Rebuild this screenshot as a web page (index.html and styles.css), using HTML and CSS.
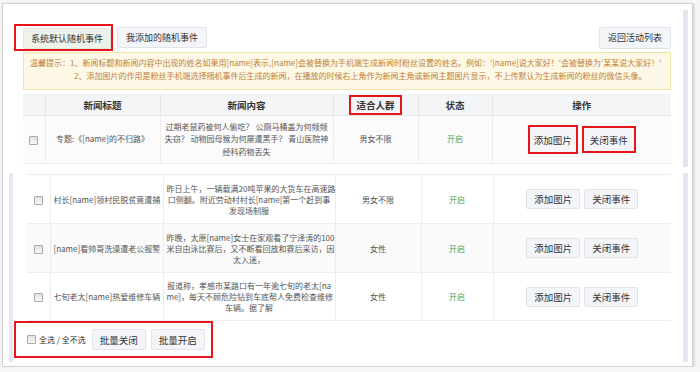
FILE: index.html
```html
<!DOCTYPE html>
<html>
<head>
    <title>随机事件管理</title>
    <meta charset="utf-8">
    <link rel="stylesheet" href="styles.css">
</head>
<body>
<div class="frame">
    <div class="shot shot-top">
        <div class="shot-body">
            <div class="toolbar">
                <div class="tab-mark">
                    <button type="button" class="btn btn-tab btn-active">系统默认随机事件</button>
                </div>
                <button type="button" class="btn btn-tab btn-second">我添加的随机事件</button>
                <button type="button" class="btn btn-back">返回活动列表</button>
            </div>
            <div class="notice">
                <div>温馨提示：1、新闻标题和新闻内容中出现的姓名如果用[name]表示,[name]会被替换为手机端生成新闻时粉丝设置的姓名。例如：'[name]说大家好！'会被替换为'某某说大家好！'</div>
                <div class="notice-second">2、添加图片的作用是粉丝手机端选择随机事件后生成的新闻，在播放的时候右上角作为新闻主角或新闻主题图片显示，不上传默认为生成新闻的粉丝的微信头像。</div>
            </div>
            <table class="events events-top">
                <colgroup>
                    <col style="width:22px"><col style="width:115px"><col style="width:173px">
                    <col style="width:85px"><col style="width:74px"><col>
                </colgroup>
                <tr>
                    <th></th>
                    <th>新闻标题</th>
                    <th>新闻内容</th>
                    <th><span class="th-mark">适合人群</span></th>
                    <th>状态</th>
                    <th>操作</th>
                </tr>
                <tr class="row-grey">
                    <td><span class="check"></span></td>
                    <td>专题:《[name]的不归路》</td>
                    <td class="content">过期老鼠药被何人偷吃？ 公厕马桶盖为何频频<br>失窃？ 动物园母猴为何屡遭黑手？ 青山医院神<br>经科药物丢失</td>
                    <td>男女不限</td>
                    <td class="on">开启</td>
                    <td class="ops ops-raise">
                        <button type="button" class="btn btn-row btn-marked">添加图片</button>
                        <button type="button" class="btn btn-row btn-marked btn-marked-short">关闭事件</button>
                    </td>
                </tr>
            </table>
        </div>
        <div class="scroll"></div>
    </div>

    <div class="shot shot-bottom">
        <div class="strip"></div>
        <div class="shot-body">
            <table class="events events-bottom">
                <colgroup>
                    <col style="width:23px"><col style="width:113px"><col style="width:172px">
                    <col style="width:86px"><col style="width:72px"><col>
                </colgroup>
                <tr>
                    <td><span class="check"></span></td>
                    <td>村长[name]领村民脱贫竟遭捕</td>
                    <td class="content">昨日上午，一辆载满20吨苹果的大货车在高速路<br>口侧翻。附近劳动村村长[name]第一个赶到事<br>发现场制服</td>
                    <td>男女不限</td>
                    <td class="on">开启</td>
                    <td class="ops">
                        <button type="button" class="btn btn-row">添加图片</button>
                        <button type="button" class="btn btn-row">关闭事件</button>
                    </td>
                </tr>
                <tr class="row-grey">
                    <td><span class="check"></span></td>
                    <td>[name]看帅哥洗澡遭老公报警</td>
                    <td class="content">昨晚，太原[name]女士在家观看了宁泽涛的100<br>米自由泳比赛后，又不断看回放和赛后采访，因<br>太入迷，</td>
                    <td>女性</td>
                    <td class="on">开启</td>
                    <td class="ops">
                        <button type="button" class="btn btn-row">添加图片</button>
                        <button type="button" class="btn btn-row">关闭事件</button>
                    </td>
                </tr>
                <tr>
                    <td><span class="check"></span></td>
                    <td>七旬老太[name]热爱维修车辆</td>
                    <td class="content">报道称，孝感市某路口有一年逾七旬的老太[na<br>me]，每天不顾危险钻到车底帮人免费检查维修<br>车辆。据了解</td>
                    <td>女性</td>
                    <td class="on">开启</td>
                    <td class="ops">
                        <button type="button" class="btn btn-row">添加图片</button>
                        <button type="button" class="btn btn-row">关闭事件</button>
                    </td>
                </tr>
            </table>
            <div class="batch">
                <span class="check"></span>
                <span class="batch-label">全选 / 全不选</span>
                <button type="button" class="btn btn-row btn-batch">批量关闭</button>
                <button type="button" class="btn btn-row btn-batch">批量开启</button>
            </div>
        </div>
        <div class="scroll"></div>
    </div>
</div>
</body>
</html>
```

FILE: styles.css
```css
body {
    margin: 0;
    background-color: #f6f6f6;
    font-family: "Noto Sans CJK SC", "Liberation Sans", sans-serif;
    color: #555;
}

.frame {
    margin: 3px 0 0 2px;
    width: 689px;
    height: 362px;
    background-color: #fff;
    border: 1px solid #d2d2d2;
    box-shadow: 1px 1px 3px rgba(0, 0, 0, 0.18);
}

.shot {display: flex;}
.shot-top {height: 163px;}
.shot-bottom {height: 199px;}

.shot-body {flex: none;}
.shot-top .shot-body {
    margin-left: 20px;
    width: 648px;
    padding-top: 20px;
}
.shot-bottom .shot-body {
    margin-left: 14px;
    width: 644px;
    padding-top: 7px;
}

.scroll {
    width: 5px;
    margin: 6px 0 0 12px;
    background-color: #e3e6ee;
}
.shot-bottom .scroll {margin-bottom: 4px;}

.strip {
    width: 4px;
    margin: 6px 0 4px 6px;
    background-color: #e5e9f1;
}

/* buttons */
.btn {
    font-family: inherit;
    color: #333;
    background-color: #f4f5f8;
    border: 1px solid #e2e4ea;
    border-radius: 2px;
    padding: 0 7px;
    margin: 0;
    cursor: pointer;
}
.btn-tab {
    font-size: 9px;
    height: 21px;
}
.btn-active {
    background-color: #edf2ea;
    border-color: #dfe6da;
}
.btn-second {
    margin-left: 4px;
    padding: 0 8px;
}
.btn-back {
    margin-left: auto;
    font-size: 9px;
    height: 22px;
    padding: 0 8px;
}
.btn-row {
    font-size: 9.5px;
    height: 20px;
    padding: 0 7px;
}
.btn-row + .btn-row {margin-left: 2px;}
.btn-marked {
    height: 29px;
    border: 2px solid #e8141b;
    border-radius: 0;
    padding: 0 4px;
}
.btn-marked-short {
    height: 27px;
    padding: 0 6px;
}

.toolbar {
    display: flex;
    align-items: center;
    height: 27px;
}
.tab-mark {
    box-sizing: border-box;
    height: 27px;
    margin-left: -9px;
    padding: 2px 0 0 7px;
    border: 2px solid #e8141b;
}
.tab-mark .btn {display: block;}

.notice {
    margin-top: 1px;
    padding: 3px 6px 7px;
    border: 1px solid #f4e3a8;
    background-color: #fdf9e6;
    color: #c0803a;
    font-size: 8px;
    line-height: 13px;
    white-space: nowrap;
}
.notice-second {padding-left: 44px;}

/* tables */
.events {
    width: 100%;
    border-collapse: collapse;
    table-layout: fixed;
    font-size: 8px;
}
.events-top {margin-top: 4px;}
.events-bottom {border-top: 1px solid #ececec;}

.events th {
    height: 21px;
    padding: 0;
    background-color: #f4f5f7;
    color: #333;
    font-size: 9.5px;
    font-weight: bold;
    border-right: 1px solid #e6e6e6;
    border-bottom: 1px solid #e6e6e6;
}
.events td {
    padding: 0 3px;
    text-align: center;
    vertical-align: middle;
    border-right: 1px solid #ededed;
    border-bottom: 1px solid #ededed;
    white-space: nowrap;
}
.events th:last-child, .events td:last-child {border-right: none;}
.events-top td {height: 47px; line-height: 12.5px;}
.events-bottom td {height: 48px; line-height: 11px;}
.events-bottom tr:last-child td {height: 47px;}

.row-grey td {background-color: #fafafa;}
.events-top .row-grey td {background-color: #fbfbfb;}

.th-mark {
    display: inline-block;
    padding: 2px 5px;
    line-height: 12px;
    border: 2px solid #e8141b;
}

.on {color: #49a349;}
.ops-raise {padding-bottom: 6px;}

.check {
    display: inline-block;
    width: 7px;
    height: 7px;
    border: 1px solid #a9a9a9;
    border-radius: 1px;
    background: linear-gradient(#e2e2e2, #f7f7f7);
    vertical-align: middle;
}

.batch {
    box-sizing: border-box;
    display: flex;
    align-items: center;
    width: 199px;
    height: 37px;
    margin-left: -13px;
    padding-left: 11px;
    border: 2px solid #e8141b;
}
.batch-label {
    margin-left: 3px;
    font-size: 8px;
    color: #333;
}
.btn-batch {
    height: 21px;
    margin-left: 6px;
}
.btn-batch + .btn-batch {margin-left: 5px;}
```
